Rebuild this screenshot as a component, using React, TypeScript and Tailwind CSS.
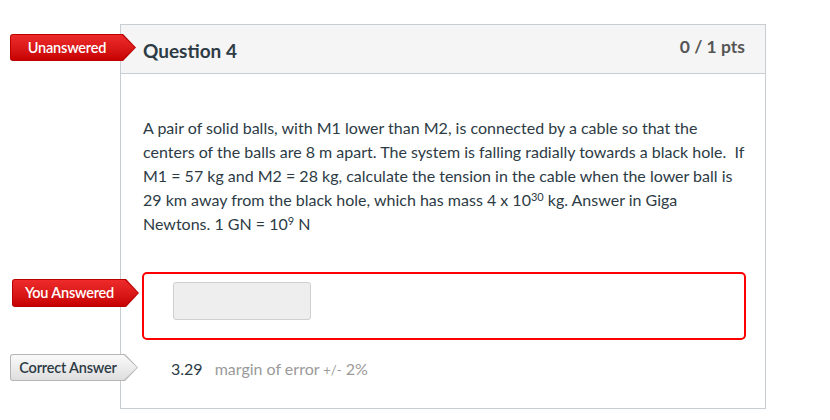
import React from "react";

const font = { fontFamily: "Lato, 'Open Sans', sans-serif" };

const Badge = ({
  label,
  tone,
  className,
}: {
  label: string;
  tone: "red" | "gray";
  className: string;
}) => {
  const shape =
    "[clip-path:polygon(0_0,calc(100%-13px)_0,100%_50%,calc(100%-13px)_100%,0_100%)]";
  return (
    <div
      className={`absolute ${className} ${shape} rounded-l-[3px] p-px ${
        tone === "red" ? "bg-[#b80000]" : "bg-[#b5b5b5]"
      }`}
    >
      <div
        className={`${shape} rounded-l-[2px] h-full flex items-center pl-[1px] pr-[13px] ${
          tone === "red"
            ? "bg-gradient-to-b from-[#ee2a2a] to-[#c70000] text-white"
            : "bg-gradient-to-b from-[#fafafa] to-[#dedede] text-[#2d3b45]"
        }`}
      >
        <span className="w-full text-center text-[14.5px] font-semibold tracking-[-0.2px]">
          {label}
        </span>
      </div>
    </div>
  );
};

const App = () => {
  return (
    <div className="w-[830px] h-[420px] bg-white pt-[24px]" style={font}>
      {/* Question card */}
      <div className="ml-[120px] w-[646px] h-[385px] border border-[#c7cdd1] relative">
        {/* Header */}
        <div className="relative h-[49px] bg-[#f5f5f5] border-b border-[#c7cdd1] flex items-center justify-between pl-[22px] pr-[20px]">
          <Badge label="Unanswered" tone="red" className="left-[-111px] top-[9px] w-[126px] h-[27px]" />
          <h2 className="text-[19px] font-bold text-[#2d3b45] mt-[4px]">Question 4</h2>
          <span className="text-[17.5px] font-bold text-[#555] mt-[-4px]">0 / 1 pts</span>
        </div>

        {/* Body */}
        <div className="pt-[42px] pl-[22px] pr-[20px]">
          <p className="text-[16px] leading-[24px] text-[#2d3b45]">
            A pair of solid balls, with M1 lower than M2, is connected by a cable so that the centers of the
            balls are 8 m apart. The system is falling radially towards a black hole.&nbsp; If M1 = 57 kg and
            M2 = 28 kg, calculate the tension in the cable when the lower ball is 29 km away from the black
            hole, which has mass 4 x 10<sup className="text-[11px] leading-none">30</sup> kg. Answer in Giga
            Newtons. 1 GN = 10<sup className="text-[11px] leading-none">9</sup> N
          </p>
        </div>

        {/* You answered */}
        <div className="relative mt-[36px] ml-[21px] w-[604px] h-[68px] border-2 border-[#ff0000] rounded-[5px] pl-[29px] pt-[8px]">
          <Badge label="You Answered" tone="red" className="left-[-132px] top-[5px] w-[127px] h-[28px]" />
          <div className="w-[138px] h-[38px] bg-[#eeeeee] border border-[#cfcfcf] rounded-[3px]" />
        </div>

        {/* Correct answer */}
        <div className="relative mt-[15px] h-[28px] flex items-center pl-[50px] text-[16px]">
          <Badge label="Correct Answer" tone="gray" className="left-[-111px] top-[-1px] w-[128px] h-[27px]" />
          <span className="text-[#2d3b45]">3.29</span>
          <span className="ml-[12px] text-[#9a9a9a]">
            margin of error <span className="text-[13px]">+/-</span> 2%
          </span>
        </div>
      </div>
    </div>
  );
};

export default App;
